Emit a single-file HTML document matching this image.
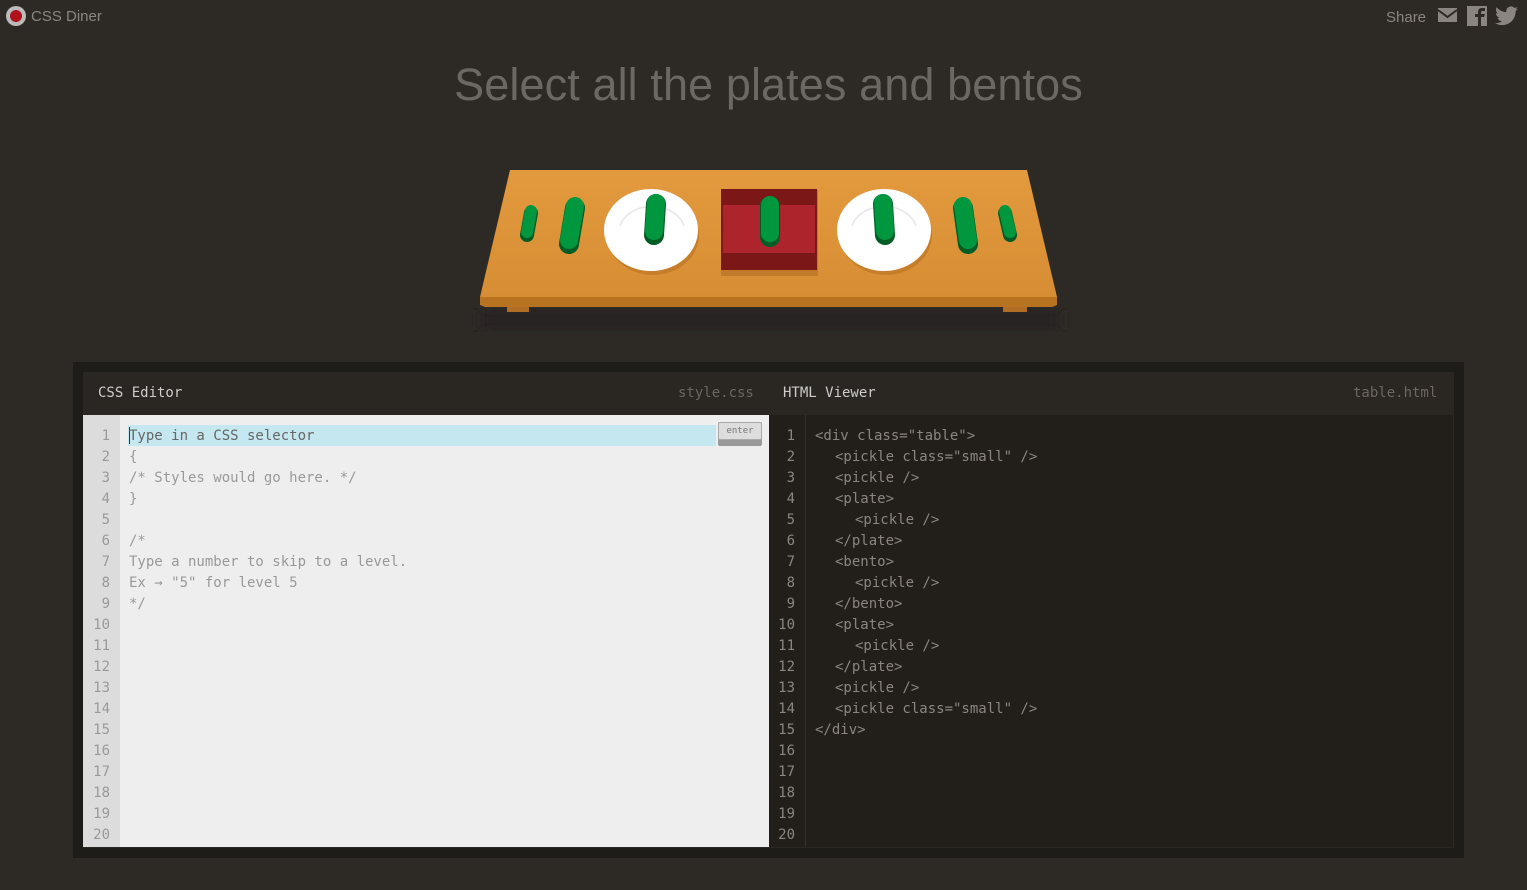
<!DOCTYPE html>
<html><head><meta charset="utf-8"><style>
*{margin:0;padding:0;box-sizing:border-box}
body{width:1527px;height:890px;background:#2d2a25;font-family:"Liberation Sans",sans-serif;position:relative;overflow:hidden}
.abs{position:absolute}
.mono{font-family:"DejaVu Sans Mono","Liberation Mono",monospace;font-size:14px}
.ln{position:absolute;height:21px;line-height:21px;white-space:pre}
</style></head><body>
<div class="abs" style="left:6px;top:6px;width:20px;height:20px;border-radius:50%;background:#bbb"></div>
<div class="abs" style="left:10px;top:10px;width:12px;height:12px;border-radius:50%;background:#b0121c"></div>
<div class="abs" style="left:31px;top:8px;font-size:15px;color:#8a8580">CSS Diner</div>
<div class="abs" style="left:1386px;top:9px;font-size:15px;color:#8a8580">Share</div>
<svg class="abs" style="left:1438px;top:7px" width="20" height="17" viewBox="0 0 20 17"><rect x="0" y="1" width="19" height="14" fill="#8a8580"/><path d="M0 3 L9.5 10 L19 3" stroke="#2d2a25" stroke-width="2" fill="none"/></svg>
<svg class="abs" style="left:1467px;top:6px" width="20" height="20" viewBox="0 0 20 20"><rect width="20" height="20" fill="#8a8580"/><path d="M11 20V11H8V8h3V6c0-3 2-4 4-4h3v3h-2c-1 0-2 0-2 2v1h4l-1 3h-3v9z" fill="#2d2a25"/></svg>
<svg class="abs" style="left:1495px;top:6px" width="23" height="20" viewBox="0 0 24 20"><path d="M24 2.4c-.9.4-1.8.6-2.8.8 1-.6 1.8-1.6 2.2-2.7-1 .6-2 1-3.1 1.2A4.9 4.9 0 0 0 11.9 6C7.8 5.8 4.2 3.9 1.7.9c-1.3 2.3-.7 5.2 1.5 6.6-.8 0-1.6-.2-2.2-.6 0 2.4 1.7 4.4 3.9 4.9-.7.2-1.5.2-2.2.1.6 2 2.5 3.4 4.6 3.4A9.9 9.9 0 0 1 0 17.3 13.9 13.9 0 0 0 7.5 19.5c9.1 0 14.3-7.7 14-14.6 1-.7 1.8-1.6 2.5-2.5z" fill="#8a8580"/></svg>
<div class="abs" style="left:0;width:1537px;top:59px;text-align:center;font-size:45px;color:#6b6762;letter-spacing:0.1px">Select all the plates and bentos</div>

<svg class="abs" style="left:470px;top:160px" width="600" height="190" viewBox="0 0 600 190">
<defs><linearGradient id="tg" x1="0" y1="0" x2="0" y2="1"><stop offset="0" stop-color="#e39a3e"/><stop offset="1" stop-color="#d78d33"/></linearGradient>
<filter id="bl"><feGaussianBlur stdDeviation="6"/></filter></defs>
<rect x="10" y="150" width="580" height="20" fill="#252220" filter="url(#bl)"/>
<rect x="37" y="140" width="22" height="12" fill="#b06d24"/><rect x="533" y="140" width="24" height="12" fill="#b06d24"/>
<polygon points="40,10 557,10 587,137 10,137" fill="url(#tg)"/>
<polygon points="10,137 587,137 587,145 582,147 15,147 10,145" fill="#b87320"/>
<ellipse cx="183" cy="75" rx="46" ry="40" fill="#c67e2a"/>
<ellipse cx="181" cy="70" rx="47" ry="41" fill="#fff"/><path d="M150 66 A33 26 0 0 1 214 66" fill="none" stroke="#e6e6e6" stroke-width="1.5"/>
<ellipse cx="416" cy="75" rx="46" ry="40" fill="#c67e2a"/>
<ellipse cx="414" cy="70" rx="47" ry="41" fill="#fff"/><path d="M382 66 A33 26 0 0 1 446 66" fill="none" stroke="#e6e6e6" stroke-width="1.5"/>
<rect x="251" y="30" width="97" height="86" fill="#c17b2b"/>
<rect x="251" y="29" width="96" height="81" fill="#7b1817"/>
<rect x="253" y="45" width="92" height="48" fill="#ad242d"/>
<g stroke-linecap="round">
<line x1="61" y1="53" x2="57" y2="75" stroke="#005d25" stroke-width="14"/><line x1="61" y1="51" x2="57" y2="72" stroke="#00973e" stroke-width="12"/>
<line x1="105" y1="48" x2="99" y2="84" stroke="#005d25" stroke-width="20"/><line x1="105" y1="46" x2="99" y2="80" stroke="#00973e" stroke-width="18"/>
<line x1="186" y1="44" x2="184" y2="75" stroke="#005d25" stroke-width="20"/><line x1="186" y1="43" x2="184" y2="71" stroke="#00973e" stroke-width="18"/>
<line x1="300" y1="46" x2="300" y2="77" stroke="#005d25" stroke-width="20"/><line x1="300" y1="45" x2="300" y2="73" stroke="#00973e" stroke-width="18"/>
<line x1="413" y1="44" x2="415" y2="75" stroke="#005d25" stroke-width="20"/><line x1="413" y1="43" x2="415" y2="71" stroke="#00973e" stroke-width="18"/>
<line x1="493" y1="48" x2="498" y2="84" stroke="#005d25" stroke-width="20"/><line x1="493" y1="46" x2="498" y2="80" stroke="#00973e" stroke-width="18"/>
<line x1="535" y1="53" x2="540" y2="75" stroke="#005d25" stroke-width="14"/><line x1="535" y1="51" x2="540" y2="72" stroke="#00973e" stroke-width="12"/>
</g>
</svg>

<div class="abs" style="left:73px;top:362px;width:1391px;height:496px;background:#1e1c18"></div>
<div class="abs" style="left:83px;top:372px;width:1371px;height:476px;background:#2a2621"></div>
<div class="abs mono" style="left:98px;top:385px;color:#ccc">CSS Editor</div>
<div class="abs mono" style="left:678px;top:385px;color:#6b6660">style.css</div>
<div class="abs mono" style="left:783px;top:385px;color:#ccc">HTML Viewer</div>
<div class="abs mono" style="left:1353px;top:385px;color:#6b6660">table.html</div>
<div class="abs" style="left:83px;top:415px;width:686px;height:432px;background:#eeeeee"></div>
<div class="abs" style="left:83px;top:415px;width:37px;height:432px;background:#dcdcdc"></div>
<div class="abs" style="left:769px;top:415px;width:684px;height:432px;background:#221f1b"></div>
<div class="abs" style="left:805px;top:415px;width:1px;height:432px;background:#35312b"></div>
<div class="abs" style="left:128px;top:425px;width:588px;height:21px;background:#c5e7f0"></div>
<div class="abs" style="left:129px;top:427px;width:1px;height:17px;background:#333"></div>
<div class="abs" style="left:718px;top:422px;width:44px;height:24px;background:#999;border-radius:2px"></div>
<div class="abs" style="left:718px;top:422px;width:44px;height:18px;background:#ddd;border:1px solid #aaa;border-radius:2px;font-family:'DejaVu Sans Mono',monospace;font-size:9px;color:#777;text-align:center;line-height:16px">enter</div>
<div class="mono" id="L"></div>
<script>
var L=document.getElementById('L'),h='';
var css=["Type in a CSS selector","{","/* Styles would go here. */","}","","/*","Type a number to skip to a level.","Ex → \"5\" for level 5","*/"];
var html=[[0,'<div class="table">'],[1,'<pickle class="small" />'],[1,'<pickle />'],[1,'<plate>'],[2,'<pickle />'],[1,'</plate>'],[1,'<bento>'],[2,'<pickle />'],[1,'</bento>'],[1,'<plate>'],[2,'<pickle />'],[1,'</plate>'],[1,'<pickle />'],[1,'<pickle class="small" />'],[0,'</div>']];
function e(s){return s.replace(/&/g,'&amp;').replace(/</g,'&lt;')}
for(var i=0;i<20;i++){var y=426+i*21;
h+='<div class="ln" style="left:83px;width:27px;text-align:right;top:'+y+'px;color:#999">'+(i+1)+'</div>';
h+='<div class="ln" style="left:769px;width:26px;text-align:right;top:'+y+'px;color:#8a8580">'+(i+1)+'</div>';
if(css[i]!==undefined)h+='<div class="ln" style="left:129px;top:'+y+'px;color:'+(i==0?'#666':'#999')+'">'+e(css[i])+'</div>';
if(html[i]!==undefined)h+='<div class="ln" style="left:'+(815+20*html[i][0])+'px;top:'+y+'px;color:#8a8580">'+e(html[i][1])+'</div>';}
L.innerHTML=h;
</script>
</body></html>
